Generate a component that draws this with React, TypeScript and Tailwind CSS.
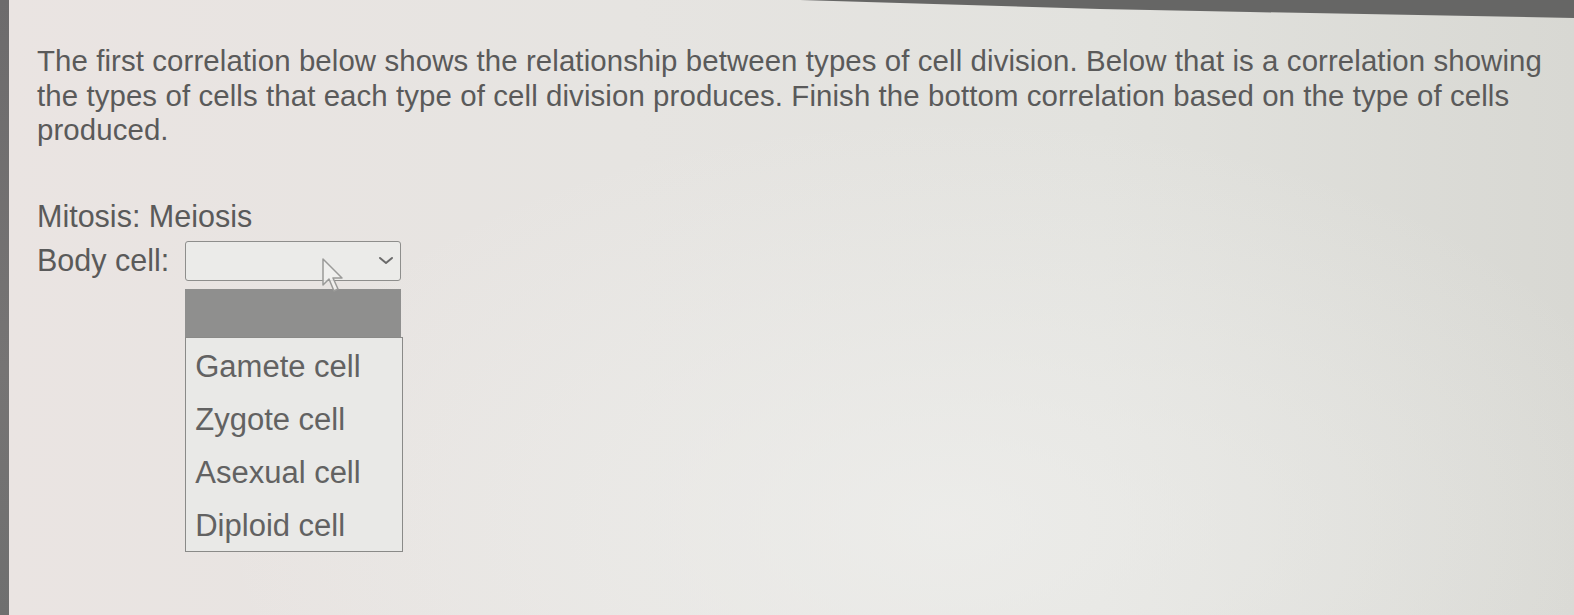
import React from "react";

const options = ["Gamete cell", "Zygote cell", "Asexual cell", "Diploid cell"];

const Chevron: React.FC = () => (
  <svg width="16" height="9" viewBox="0 0 16 9" fill="none">
    <path d="M2 2 L8 7 L14 2" stroke="#6a6a6a" strokeWidth="2" strokeLinecap="round" strokeLinejoin="round" />
  </svg>
);

const Pointer: React.FC = () => (
  <svg width="26" height="36" viewBox="0 0 26 36" fill="none">
    <path
      d="M2 1 L2 27 L8 21 L13 33 L17 31 L12 20 L21 20 Z"
      fill="#f1f1ef"
      fillOpacity="0.85"
      stroke="#9a9a98"
      strokeWidth="1.5"
      strokeLinejoin="round"
    />
  </svg>
);

const App: React.FC = () => {
  return (
    <div className="relative w-[1574px] h-[615px] overflow-hidden flex bg-[linear-gradient(90deg,#eae4e2_0%,#e6e4e1_40%,#e2e2de_70%,#d8d8d3_100%)] font-['Liberation_Sans',Arial,sans-serif] text-[#5a5a5a]">
      {/* screen bezel bits from the photo */}
      <div className="absolute top-0 left-0 w-full h-[20px] bg-[#666665] [clip-path:polygon(800px_0,1574px_0,1574px_18px,1250px_12px,1100px_9px,900px_3px)]" />
      <div className="w-[9px] shrink-0 bg-[linear-gradient(180deg,#6d6b6c,#767474_60%,#6f6f6f)]" />

      <div className="flex-1 pl-[28px] pt-[44px] bg-[radial-gradient(ellipse_at_60%_85%,rgba(240,240,238,0.7),transparent_55%)]">
        <p className="w-[1520px] text-[29.4px] leading-[34.5px] tracking-[0.1px]">
          The first correlation below shows the relationship between types of cell division. Below that is a correlation
          showing the types of cells that each type of cell division produces. Finish the bottom correlation based on the
          type of cells produced.
        </p>

        <div className="mt-[48px] text-[30.5px] leading-[41px]">Mitosis: Meiosis</div>

        <div className="flex items-start">
          <div className="mt-[3px] text-[30.5px] leading-[41px]">Body cell:</div>
          <div className="relative ml-[16px] flex flex-col w-[218px]">
            <div className="mt-[4px] h-[40px] w-[216px] rounded-[3px] border border-[#8e8e8c] bg-[#ebebe9] flex items-center justify-end pr-[6px]">
              <Chevron />
            </div>
            <div className="absolute left-[136px] top-[21px]">
              <Pointer />
            </div>
            <div className="mt-[8px] h-[48px] w-[216px] bg-[#8f8f8e]" />
            <div className="w-[218px] h-[215px] border border-[#8a8a88] bg-[#e9e9e7] pt-[2px] pl-[9px]">
              {options.map((o) => (
                <div key={o} className="text-[31px] leading-[53px] text-[#626262]">
                  {o}
                </div>
              ))}
            </div>
          </div>
        </div>
      </div>
    </div>
  );
};

export default App;
